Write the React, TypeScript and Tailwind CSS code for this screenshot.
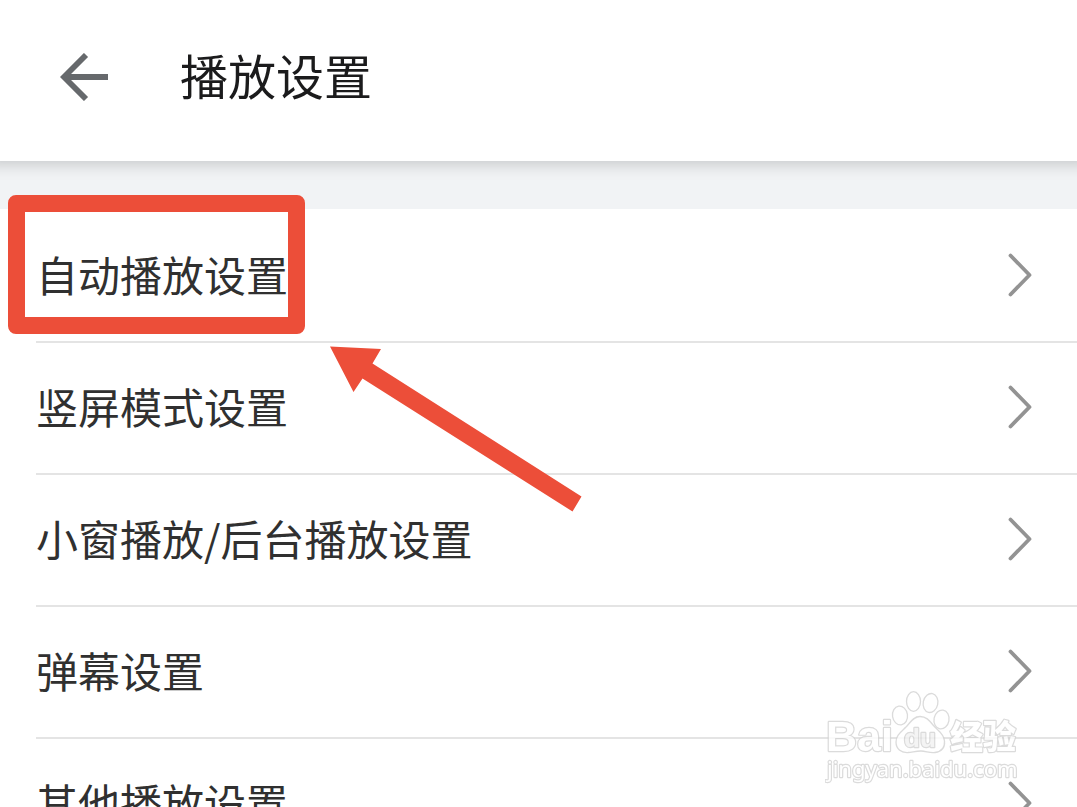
const items = [
  '自动播放设置',
  '竖屏模式设置',
  '小窗播放/后台播放设置',
  '弹幕设置',
  '其他播放设置',
];

function BackIcon() {
  return (
    <svg viewBox="0 0 48 48" className="h-12 w-12" fill="none" stroke="#66696c" strokeWidth="5.8" aria-hidden="true">
      <path d="M48 24H5" />
      <path d="M26 2L4 24L26 46" />
    </svg>
  );
}

function Chevron() {
  return (
    <svg
      viewBox="0 0 24 44"
      className="h-11 w-6 shrink-0"
      fill="none"
      stroke="#939393"
      strokeWidth="3.8"
      strokeLinecap="round"
      strokeLinejoin="round"
      aria-hidden="true"
    >
      <path d="M2.500 2.500L21.500 22L2.500 41.500" />
    </svg>
  );
}

function Arrow() {
  return (
    <svg viewBox="0 0 254 168" className="pointer-events-none absolute left-[329px] top-[345px] h-[168px] w-[254px]" aria-hidden="true">
      <path d="M1 1.500L52 4L43.500 18.500L252.500 151.500L243.500 166.500L33.500 33.500L24.500 47Z" fill="#ec4e39" />
    </svg>
  );
}

function Watermark() {
  return (
    <svg
      viewBox="0 0 196 100"
      className="pointer-events-none absolute bottom-[17px] right-[56px] h-[100px] w-[196px] opacity-80"
      fill="#ffffff"
      stroke="#d2d2d2"
      strokeWidth="1.3"
      strokeLinejoin="round"
      role="img"
      aria-label="Baidu 经验"
    >
      <ellipse cx="75" cy="25.500" rx="7.500" ry="9.500" transform="rotate(-8 75 25.500)" />
      <ellipse cx="88.500" cy="11.500" rx="7" ry="9.800" />
      <ellipse cx="105.500" cy="13" rx="7.300" ry="9.600" transform="rotate(12 105.500 13)" />
      <ellipse cx="116.500" cy="29.500" rx="7.500" ry="9.500" transform="rotate(10 116.500 29.500)" />
      <path d="M95 26.500C88 26.500 85 33 81 37C76 42 71 45 71 52C71 59 76 63 83 62.500C88 62 91 61 96 61C101 61 105 63.500 110 62.500C117 61.500 120 57 119.500 51C119 43 112 40 108 35C104 30 101 26.500 95 26.500Z" />
      <g paintOrder="stroke" strokeWidth="2.4">
        <text x="1" y="61" fontFamily="Liberation Sans, sans-serif" fontWeight="700" fontSize="43">
          Bai
        </text>
        <text x="79" y="57" fontFamily="Liberation Sans, sans-serif" fontWeight="700" fontSize="26" fill="#f2f2f2">
          du
        </text>
        <text x="125" y="59" fontFamily="Noto Sans CJK SC, sans-serif" fontWeight="900" fontSize="33">
          经验
        </text>
        <text x="2" y="87" fontFamily="Noto Sans, sans-serif" fontSize="22">
          jingyan.baidu.com
        </text>
      </g>
    </svg>
  );
}

export default function App() {
  return (
    <div
      lang="zh-CN"
      className="relative flex h-screen flex-col overflow-hidden bg-white font-['Noto_Sans_CJK_SC','Noto_Sans',sans-serif]"
    >
      <header className="z-10 flex shrink-0 items-center gap-18 bg-white px-15 pt-10 pb-12 shadow-[0_-10px_14px_14px_rgba(0,0,0,0.17)]">
        <button type="button" aria-label="返回">
          <BackIcon />
        </button>
        <h1 className="pb-1 text-5xl leading-[69px] text-[#1b1b1c]">播放设置</h1>
      </header>
      <main className="min-h-0 flex-1 overflow-y-auto bg-[#f1f3f5] pt-12 [scrollbar-width:none]">
        <ul className="bg-white pl-9">
          {items.map((label) => (
            <li key={label} className="border-t-2 border-[#e4e4e4] first:border-transparent">
              <button type="button" className="flex h-[130px] w-full items-center justify-between pr-[45px] pb-0.5 text-left">
                <span className="pb-0.5 text-[42px] leading-15 text-[#303030]">{label}</span>
                <Chevron />
              </button>
            </li>
          ))}
        </ul>
      </main>
      <div className="pointer-events-none absolute left-2 top-[195px] h-[139px] w-[297px] rounded-lg border-[17px] border-[#ec4e39]" />
      <Arrow />
      <Watermark />
    </div>
  );
}
